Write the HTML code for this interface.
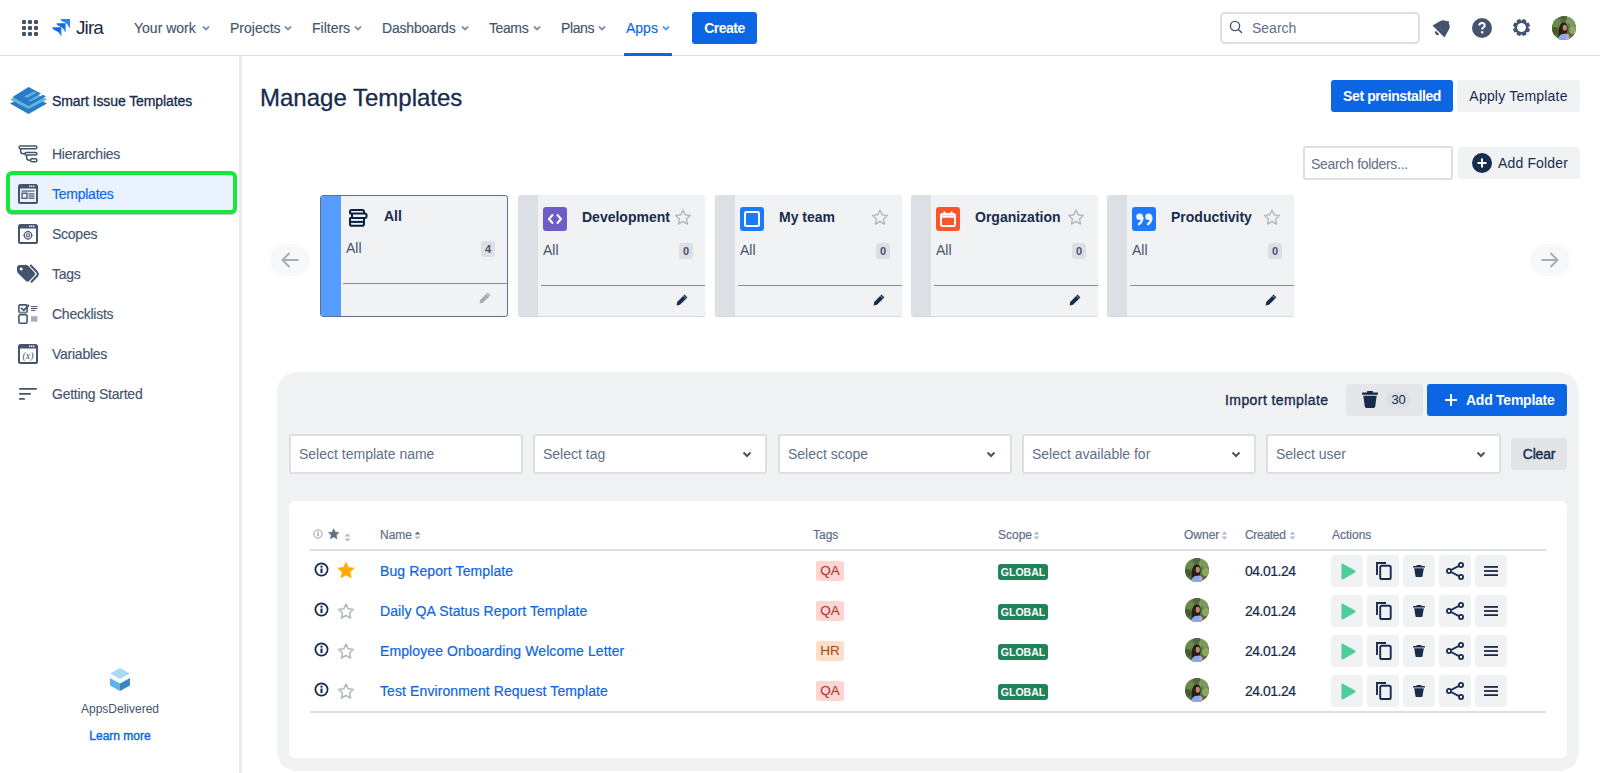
<!DOCTYPE html>
<html><head><meta charset="utf-8">
<style>
*{box-sizing:border-box;margin:0;padding:0}
html,body{width:1600px;height:773px;overflow:hidden;background:#fff;font-family:"Liberation Sans",sans-serif;color:#172b4d}
.a{position:absolute}
.t{position:absolute;white-space:nowrap;font-size:14px;line-height:20px}
svg{display:block}
/* top nav */
#nav{position:absolute;left:0;top:0;width:1600px;height:56px;border-bottom:1px solid #dcdfe4;background:#fff}
.ni{position:absolute;top:18px;font-size:14px;line-height:20px;color:#44546f;white-space:nowrap}
.chev{position:absolute;top:25px;width:8px;height:6px}
/* sidebar */
#side{position:absolute;left:0;top:56px;width:242px;height:717px;border-right:3px solid #ebecf0;background:#fff}
.si{position:absolute;left:52px;font-size:14px;line-height:20px;color:#44546f;white-space:nowrap;letter-spacing:-0.25px}
.sic{position:absolute;left:18px;width:20px;height:20px}
/* cards */
.card{position:absolute;top:195px;width:186.5px;height:121px;background:#f1f2f4;border-radius:3px;box-shadow:0 1px 1px rgba(9,30,66,0.18)}
.card .bar{position:absolute;left:0;top:0;bottom:0;width:20px;background:#dcdfe4;border-radius:3px 0 0 3px}
.card .ttl{position:absolute;top:207px}
.cnt{position:absolute;width:14px;height:16px;border-radius:3px;background:#dcdfe4;font-size:11px;font-weight:700;line-height:16px;text-align:center;color:#44546f}
.sep{position:absolute;height:1px;background:#858b95}
.inp{position:absolute;top:434px;height:40px;background:#fff;border:2px solid #dcdfe4;border-radius:3px}
.inp span{position:absolute;left:8px;top:8px;font-size:14px;line-height:20px;color:#626f86;white-space:nowrap}
.btn{position:absolute;width:32px;height:32px;border-radius:4px;background:#f1f2f4}
.th{position:absolute;top:527px;font-size:12px;line-height:16px;color:#626f86;white-space:nowrap}
.lnk{position:absolute;left:380px;font-size:14px;line-height:20px;color:#0c66e4;white-space:nowrap;letter-spacing:0.1px}
.tag{position:absolute;left:816px;width:28px;height:20px;border-radius:3px;background:#ffd5d2;color:#ae2e24;font-size:13.5px;line-height:20px;text-align:center}
.glob{position:absolute;left:998px;width:50px;height:16px;border-radius:3px;background:#1f845a;color:#fff;font-size:10.5px;font-weight:700;line-height:16px;text-align:center}
.date{position:absolute;left:1245px;font-size:14px;line-height:20px;color:#172b4d;letter-spacing:-0.5px}
.av{position:absolute;width:24px;height:24px;border-radius:50%;overflow:hidden}

.lnk,.th,.date{-webkit-text-stroke:0.2px currentColor}
.ni,.si{-webkit-text-stroke:0.15px currentColor}
</style></head><body>
<svg width="0" height="0" style="position:absolute"><defs>
<clipPath id="avc"><circle cx="12" cy="12" r="12"/></clipPath>
</defs></svg>

<!-- TOP NAV -->
<div id="nav">
  <!-- grid -->
  <svg class="a" style="left:22px;top:20px" width="16" height="16" viewBox="0 0 16 16" fill="#44546f">
    <rect x="0" y="0" width="4" height="4" rx="1"/><rect x="6" y="0" width="4" height="4" rx="1"/><rect x="12" y="0" width="4" height="4" rx="1"/>
    <rect x="0" y="6" width="4" height="4" rx="1"/><rect x="6" y="6" width="4" height="4" rx="1"/><rect x="12" y="6" width="4" height="4" rx="1"/>
    <rect x="0" y="12" width="4" height="4" rx="1"/><rect x="6" y="12" width="4" height="4" rx="1"/><rect x="12" y="12" width="4" height="4" rx="1"/>
  </svg>
  <!-- jira logo -->
  <svg class="a" style="left:52px;top:19px" width="19" height="18" viewBox="0 0 19 18">
    <defs><linearGradient id="jg" x1="0" y1="0" x2="0.8" y2="0.8"><stop offset="0" stop-color="#2a7ffb"/><stop offset="0.5" stop-color="#0f5fe0"/><stop offset="1" stop-color="#2684ff"/></linearGradient></defs>
    <path transform="translate(0.1 8.3)" d="M0 0.3 Q0 0 0.3 0 H9.3 V9.3 Q9.0 9.3 8.700000000000001 8.700000000000001 Q6.51 4.836 6.2 5 Q4.6 3.6 2 2.6 Q0 1.7 0 0.3 Z" fill="url(#jg)"/>
    <path transform="translate(4.4 4.15)" d="M0 0.3 Q0 0 0.3 0 H9.3 V9.3 Q9.0 9.3 8.700000000000001 8.700000000000001 Q6.51 4.836 6.2 5 Q4.6 3.6 2 2.6 Q0 1.7 0 0.3 Z" fill="url(#jg)"/>
    <path transform="translate(8.7 0)" d="M0 0.3 Q0 0 0.3 0 H9.3 V9.3 Q9.0 9.3 8.700000000000001 8.700000000000001 Q6.51 4.836 6.2 5 Q4.6 3.6 2 2.6 Q0 1.7 0 0.3 Z" fill="#2684ff"/>
  </svg>
  <div class="t" style="left:76px;top:16px;font-size:19px;line-height:24px;color:#1d2b45;letter-spacing:-0.9px">Jira</div>

  <div class="ni" style="left:134px">Your work</div>
  <div class="ni" style="left:230px">Projects</div>
  <div class="ni" style="left:312px">Filters</div>
  <div class="ni" style="left:382px;letter-spacing:-0.2px">Dashboards</div>
  <div class="ni" style="left:489px;letter-spacing:-0.4px">Teams</div>
  <div class="ni" style="left:561px;letter-spacing:-0.4px">Plans</div>
  <div class="ni" style="left:626px;color:#0c66e4">Apps</div>
  <div class="a" style="left:624px;top:53px;width:48px;height:3px;background:#0c66e4;border-radius:1px 1px 0 0"></div>

  <svg class="chev" style="left:202px" viewBox="0 0 8 6"><path d="M1 1.5 L4 4.5 L7 1.5" stroke="#8590a2" stroke-width="1.8" fill="none"/></svg>
  <svg class="chev" style="left:284px" viewBox="0 0 8 6"><path d="M1 1.5 L4 4.5 L7 1.5" stroke="#8590a2" stroke-width="1.8" fill="none"/></svg>
  <svg class="chev" style="left:354px" viewBox="0 0 8 6"><path d="M1 1.5 L4 4.5 L7 1.5" stroke="#8590a2" stroke-width="1.8" fill="none"/></svg>
  <svg class="chev" style="left:461px" viewBox="0 0 8 6"><path d="M1 1.5 L4 4.5 L7 1.5" stroke="#8590a2" stroke-width="1.8" fill="none"/></svg>
  <svg class="chev" style="left:533px" viewBox="0 0 8 6"><path d="M1 1.5 L4 4.5 L7 1.5" stroke="#8590a2" stroke-width="1.8" fill="none"/></svg>
  <svg class="chev" style="left:598px" viewBox="0 0 8 6"><path d="M1 1.5 L4 4.5 L7 1.5" stroke="#8590a2" stroke-width="1.8" fill="none"/></svg>
  <svg class="chev" style="left:662px" viewBox="0 0 8 6"><path d="M1 1.5 L4 4.5 L7 1.5" stroke="#579dff" stroke-width="1.8" fill="none"/></svg>

  <div class="a" style="left:692px;top:12px;width:65px;height:32px;background:#0c66e4;border-radius:3px"></div>
  <div class="t" style="left:692px;top:18px;width:65px;text-align:center;color:#fff;font-weight:700;letter-spacing:-0.5px">Create</div>

  <!-- search -->
  <div class="a" style="left:1220px;top:12px;width:200px;height:32px;border:2px solid #dcdfe4;border-radius:5px"></div>
  <svg class="a" style="left:1229px;top:20px" width="14" height="14" viewBox="0 0 14 14"><circle cx="6" cy="6" r="4.6" stroke="#44546f" stroke-width="1.4" fill="none"/><path d="M9.4 9.4 L12.6 12.6" stroke="#44546f" stroke-width="1.4" stroke-linecap="round"/></svg>
  <div class="t" style="left:1252px;top:18px;color:#626f86">Search</div>

  <!-- bell -->
  <svg class="a" style="left:1432px;top:17px" width="21" height="21" viewBox="0 0 20 20">
    <g transform="translate(10 10) rotate(45) scale(1.12) translate(-10 -9.5)" fill="#44546f"><path d="M2.8 14.3 L4.9 6.9 C5.5 4.4 7.5 3.2 10 3.2 C12.5 3.2 14.5 4.4 15.1 6.9 L17.2 14.3 Z"/><circle cx="10" cy="3.2" r="1.2"/><path d="M7.9 15.5 A2.1 2.1 0 0 0 12.1 15.5 Z"/></g>
  </svg>
  <!-- help -->
  <svg class="a" style="left:1472px;top:18px" width="20" height="20" viewBox="0 0 20 20">
    <circle cx="10" cy="10" r="10" fill="#44546f"/>
    <path d="M7.3 7.6 C7.3 5.9 8.5 5 10 5 C11.6 5 12.7 6 12.7 7.4 C12.7 8.7 11.9 9.2 11 9.8 C10.3 10.3 10.2 10.6 10.2 11.6" stroke="#fff" stroke-width="2" fill="none"/>
    <rect x="9.1" y="13.2" width="2.2" height="2.2" fill="#fff"/>
  </svg>
  <!-- gear -->
  <svg class="a" style="left:1512px;top:18px" width="19" height="19" viewBox="0 0 19 19">
    <g fill="#44546f" transform="translate(9.5 9.5)"><rect x="-2.1" y="-8.6" width="4.2" height="4" rx="1.2" transform="rotate(22.5)"/><rect x="-2.1" y="-8.6" width="4.2" height="4" rx="1.2" transform="rotate(67.5)"/><rect x="-2.1" y="-8.6" width="4.2" height="4" rx="1.2" transform="rotate(112.5)"/><rect x="-2.1" y="-8.6" width="4.2" height="4" rx="1.2" transform="rotate(157.5)"/><rect x="-2.1" y="-8.6" width="4.2" height="4" rx="1.2" transform="rotate(202.5)"/><rect x="-2.1" y="-8.6" width="4.2" height="4" rx="1.2" transform="rotate(247.5)"/><rect x="-2.1" y="-8.6" width="4.2" height="4" rx="1.2" transform="rotate(292.5)"/><rect x="-2.1" y="-8.6" width="4.2" height="4" rx="1.2" transform="rotate(337.5)"/></g>
    <circle cx="9.5" cy="9.5" r="5.7" stroke="#44546f" stroke-width="2.4" fill="none"/>
  </svg>
  <!-- avatar -->
  <svg class="a" style="left:1552px;top:16px" width="24" height="24" viewBox="0 0 24 24"><g clip-path="url(#avc)">
<rect width="24" height="24" fill="#56723c"/>
<circle cx="4" cy="7" r="5" fill="#6b8a4a"/><circle cx="19" cy="5" r="5.5" fill="#7c9b58"/><circle cx="21" cy="14" r="4" fill="#8ba763"/><circle cx="2" cy="15" r="4" fill="#435d2e"/><circle cx="12" cy="2" r="3" fill="#4f6a3a"/>
<circle cx="9" cy="3" r="1.3" fill="#6e5a86" opacity="0.7"/><circle cx="17" cy="9" r="1.2" fill="#6e5a86" opacity="0.6"/>
<path d="M6.5 21 Q6 15 7.5 10.5 Q9 6.5 12 6.5 Q14.8 6.5 15.3 10 Q15.8 13 14.5 18 L11 21 Z" fill="#2a1c16"/>
<ellipse cx="12.8" cy="11.8" rx="2.1" ry="3" fill="#b88a74"/>
<path d="M6 24 Q7 18.5 10.5 18 L14 17.5 Q16.5 18 17.5 20.5 L17.5 24 Z" fill="#86ade0"/>
<path d="M13.8 24 L14.8 18.3 Q16.3 18.2 16.8 19.3 L16.3 24 Z" fill="#e395d6"/>
</g></svg>
</div>

<!-- SIDEBAR -->
<div id="side">
  <!-- logo -->
  <svg class="a" style="left:10px;top:30px" width="37" height="28" viewBox="0 0 37 28">
    <path d="M0 17.5 L18.5 8 L37 17.5 L18.5 28 Z" fill="#2a7ac6"/>
    <path d="M0 13.5 L18.5 4 L37 13.5 L18.5 23 Z" fill="#5fb8dc"/>
    <path d="M2.5 11 L18.5 1 L31 7.5 L22 12.5 L24 13.5 L33 8.7 L36 10.5 L18.5 20 L2.5 11 Z" fill="#2a7ac6"/>
    <path d="M14 10.5 L24 5.3 L27 6.8 L17 12 Z" fill="#5fb8dc" opacity="0.9"/>
    <path d="M18.5 14.5 L28.5 9.3 L30.5 10.3 L20.5 15.5 Z" fill="#5fb8dc" opacity="0.9"/>
  </svg>
  <div class="t" style="left:52px;top:35px;font-weight:400;-webkit-text-stroke:0.3px #172b4d;letter-spacing:-0.1px;color:#172b4d">Smart Issue Templates</div>

  <!-- hierarchies -->
  <svg class="sic" style="top:89px" viewBox="0 0 20 20" fill="none" stroke="#44546f" stroke-width="1.5">
    <rect x="1.1" y="1.1" width="17.8" height="2.6" rx="1.3"/>
    <path d="M2.6 3.8 V6 Q2.6 8.8 5.4 8.8 H6.9"/>
    <rect x="6.9" y="7.6" width="12" height="2.5" rx="1.25"/>
    <path d="M8.6 10.2 V12.5 Q8.6 15.3 11.4 15.3 H12.6"/>
    <rect x="12.6" y="13.8" width="6.3" height="3" rx="1.4"/>
  </svg>
  <div class="si" style="top:88px">Hierarchies</div>

  <!-- selected templates -->
  <div class="a" style="left:6px;top:115px;width:231px;height:43px;border:4px solid #14e83a;border-radius:6px;background:#e9f2fe;box-shadow:0 1px 1px rgba(0,0,0,0.25)"></div>
  <svg class="sic" style="top:128px" viewBox="0 0 20 20">
    <rect x="0" y="0" width="20" height="20" rx="2.5" fill="#44546f"/>
    <rect x="2" y="4.5" width="16" height="13.5" rx="0.5" fill="#e9f2fe"/>
    <rect x="13" y="1.5" width="1.4" height="1.4" fill="#e9f2fe"/><rect x="15" y="1.5" width="1.4" height="1.4" fill="#e9f2fe"/><rect x="17" y="1.5" width="1.4" height="1.4" fill="#e9f2fe" opacity="0"/>
    <rect x="11" y="1.5" width="1.4" height="1.4" fill="#e9f2fe"/>
    <rect x="3.5" y="6.5" width="13" height="1.1" fill="#44546f"/>
    <rect x="4" y="9.2" width="5" height="5" fill="none" stroke="#44546f" stroke-width="1.3"/>
    <rect x="10.5" y="9.3" width="6" height="1.2" fill="#44546f"/>
    <rect x="10.5" y="11.5" width="6" height="1.2" fill="#44546f"/>
    <rect x="10.5" y="13.6" width="6" height="1.2" fill="#44546f"/>
  </svg>
  <div class="si" style="top:128px;color:#0c66e4">Templates</div>

  <!-- scopes -->
  <svg class="sic" style="top:168px" viewBox="0 0 20 20">
    <rect x="0" y="0" width="20" height="20" rx="2.5" fill="#44546f"/>
    <rect x="2" y="4.5" width="16" height="13.5" rx="0.5" fill="#fff"/>
    <rect x="11" y="1.5" width="1.4" height="1.4" fill="#fff"/><rect x="13" y="1.5" width="1.4" height="1.4" fill="#fff"/><rect x="15" y="1.5" width="1.4" height="1.4" fill="#fff"/>
    <circle cx="10" cy="11.3" r="3.7" fill="none" stroke="#44546f" stroke-width="1.2"/>
    <circle cx="10" cy="11.3" r="1.6" fill="none" stroke="#44546f" stroke-width="1.1"/>
    <path d="M5.2 11.3 H6.5 M13.5 11.3 H14.8 M10 6.6 V7.8 M10 14.8 V16" stroke="#44546f" stroke-width="1"/>
  </svg>
  <div class="si" style="top:168px">Scopes</div>

  <!-- tags -->
  <svg class="sic" style="top:208px;width:24px;left:16px" viewBox="0 0 24 20">
    <path d="M1 4 Q1 1 4 1 L10 1 Q11.5 1 12.5 2 L18.5 8.5 Q20 10 18.5 11.5 L13 17 Q11.5 18.5 10 17 L2.5 9.8 Q1 8.5 1 6.5 Z" fill="#44546f"/>
    <circle cx="5.2" cy="5" r="1.5" fill="#fff"/>
    <path d="M14.8 1.5 L21 8 Q22.6 10 21 12 L15.5 17.8" fill="none" stroke="#44546f" stroke-width="2" stroke-linecap="round"/>
  </svg>
  <div class="si" style="top:208px">Tags</div>

  <!-- checklists -->
  <svg class="sic" style="top:248px" viewBox="0 0 20 20" fill="none" stroke="#44546f">
    <rect x="0.9" y="0.9" width="8.2" height="7.6" rx="1.2" stroke-width="1.6"/>
    <path d="M3 3.8 L5.8 6.3 L11 0.8" stroke-width="1.8" stroke="#44546f"/>
    <rect x="1.5" y="8.5" width="7" height="2" fill="#a5adba" stroke="none"/>
    <rect x="0.9" y="10.8" width="8.2" height="8.4" rx="1.2" stroke-width="1.6"/>
    <path d="M13 2.6 H19.4 M13 4.5 H19.4 M13 6.4 H17.5" stroke-width="1"/>
    <rect x="13" y="12.2" width="6.4" height="5.4" fill="#a5adba" stroke="none"/>
  </svg>
  <div class="si" style="top:248px">Checklists</div>

  <!-- variables -->
  <svg class="sic" style="top:288px" viewBox="0 0 20 20">
    <rect x="0" y="0" width="20" height="20" rx="2.5" fill="#44546f"/>
    <rect x="2" y="4.5" width="16" height="13.5" rx="0.5" fill="#fff"/>
    <rect x="11" y="1.5" width="1.4" height="1.4" fill="#fff"/><rect x="13" y="1.5" width="1.4" height="1.4" fill="#fff"/><rect x="15" y="1.5" width="1.4" height="1.4" fill="#fff"/>
    <text x="10" y="14.6" text-anchor="middle" font-family="Liberation Serif" font-style="italic" font-size="10" fill="#44546f">(x)</text>
  </svg>
  <div class="si" style="top:288px">Variables</div>

  <!-- getting started -->
  <svg class="sic" style="top:328px" viewBox="0 0 20 20" fill="#44546f">
    <rect x="1" y="3.9" width="18" height="1.9" rx="0.9"/>
    <rect x="1" y="8.9" width="12" height="1.9" rx="0.9"/>
    <rect x="1" y="13.9" width="6" height="1.9" rx="0.9"/>
  </svg>
  <div class="si" style="top:328px">Getting Started</div>

  <!-- apps delivered -->
  <svg class="a" style="left:110px;top:612px" width="20" height="23" viewBox="0 0 20 23">
    <path d="M10 0 L20 5.5 L10 11 L0 5.5 Z" fill="#a9dbf5"/>
    <path d="M0 10 L10 15.5 L10 23 L0 17.5 Z" fill="#5eb3e6"/>
    <path d="M20 10 L10 15.5 L10 23 L20 17.5 Z" fill="#3a86c8"/>
  </svg>
  <div class="t" style="left:0;top:645px;width:240px;text-align:center;font-size:12px;line-height:16px;color:#44546f">AppsDelivered</div>
  <div class="t" style="left:0;top:672px;width:240px;text-align:center;font-size:12px;line-height:16px;color:#0c66e4;font-weight:400;-webkit-text-stroke:0.4px #0c66e4">Learn more</div>
</div>

<!-- MAIN -->
<div id="main">
  <div class="t" style="left:260px;top:83px;font-size:24px;line-height:30px;color:#172b4d;-webkit-text-stroke:0.3px #172b4d">Manage Templates</div>
  <div class="a" style="left:1331px;top:80px;width:122px;height:32px;background:#0c66e4;border-radius:3px"></div>
  <div class="t" style="left:1331px;top:86px;width:122px;text-align:center;color:#fff;font-weight:700;letter-spacing:-0.4px">Set preinstalled</div>
  <div class="a" style="left:1457px;top:80px;width:123px;height:32px;background:#f1f2f4;border-radius:3px"></div>
  <div class="t" style="left:1457px;top:86px;width:123px;text-align:center;color:#172b4d;letter-spacing:0.2px">Apply Template</div>

  <div class="a" style="left:1303px;top:146px;width:150px;height:34px;border:2px solid #dcdfe4;border-radius:3px;background:#fff"></div>
  <div class="t" style="left:1311px;top:154px;color:#626f86;letter-spacing:-0.3px">Search folders...</div>
  <div class="a" style="left:1458px;top:147px;width:122px;height:32px;background:#f1f2f4;border-radius:3px"></div>
  <svg class="a" style="left:1472px;top:153px" width="20" height="20" viewBox="0 0 20 20"><circle cx="10" cy="10" r="10" fill="#172b4d"/><path d="M10 5.5 V14.5 M5.5 10 H14.5" stroke="#fff" stroke-width="2"/></svg>
  <div class="t" style="left:1498px;top:153px;color:#172b4d;letter-spacing:0.15px">Add Folder</div>

  <div class="a" style="left:270px;top:244px;width:40px;height:32px;border-radius:16px;background:#f7f8f9"></div>
  <svg class="a" style="left:280px;top:251px" width="20" height="18" viewBox="0 0 20 18" fill="none" stroke="#a5adba" stroke-width="2"><path d="M18.5 9 H2.5 M9.5 2 L2.5 9 L9.5 16"/></svg>
  <div class="a" style="left:1530px;top:244px;width:40px;height:32px;border-radius:16px;background:#f7f8f9"></div>
  <svg class="a" style="left:1540px;top:251px" width="20" height="18" viewBox="0 0 20 18" fill="none" stroke="#a5adba" stroke-width="2"><path d="M1.5 9 H17.5 M10.5 2 L17.5 9 L10.5 16"/></svg>

  
  <div class="card" style="left:320px;width:188px;height:122px;border:1px solid #626f86;box-shadow:none">
    <div class="bar" style="left:0;width:20px;background:#579dff;border-radius:2px 0 0 2px"></div>
  </div>
  <svg class="a" style="left:348px;top:208px" width="20" height="20" viewBox="0 0 20 20" fill="none" stroke="#091e42" stroke-width="2">
    <path d="M2 5.6 V3.8 Q2 2 3.8 2 H14.2 Q16 2 16 3.8 V5.6"/>
    <path d="M1.5 5.6 H16.8 Q18.6 5.6 18.6 7.85 Q18.6 10.1 16.8 10.1 H1.5"/>
    <path d="M4 5.6 V10.1"/>
    <path d="M2 10.1 V15.9 Q2 17.7 3.8 17.7 H14.2 Q16 17.7 16 15.9 V10.1"/>
    <path d="M2 13.9 H16"/>
  </svg>
  <div class="t" style="left:384px;top:206px;font-weight:700;color:#172b4d">All</div>
  <div class="t" style="left:346px;top:238px;color:#44546f">All</div>
  <div class="cnt" style="left:481px;top:241px">4</div>
  <div class="sep" style="left:343px;top:283px;width:165px"></div>
  <svg class="a" style="left:479px;top:292px" width="12" height="12" viewBox="0 0 12 12"><path d="M8.6 0.6 L11.4 3.4 L4 10.8 L0.6 11.4 L1.2 8 Z" fill="#a5adba"/><path d="M7.4 1.8 L10.2 4.6" stroke="#f1f2f4" stroke-width="0.6"/></svg>

  <div class="card" style="left:518px"><div class="bar"></div></div>
  <svg class="a" style="left:543px;top:207px" width="24" height="24" viewBox="0 0 24 24"><rect width="24" height="24" rx="3" fill="#6e5dc6"/><path d="M9.5 8 L6 12 L9.5 16 M14.5 8 L18 12 L14.5 16" stroke="#fff" stroke-width="2" fill="none" stroke-linecap="round" stroke-linejoin="round"/></svg>
  <div class="t" style="left:582px;top:207px;font-weight:700;color:#172b4d">Development</div>
  <svg class="a" style="left:674px;top:208px" width="18" height="18" viewBox="0 0 20 20"><path d="M10.00 2.30 L12.41 7.58 L18.18 8.24 L13.90 12.17 L15.05 17.86 L10.00 15.00 L4.95 17.86 L6.10 12.17 L1.82 8.24 L7.59 7.58 Z" fill="none" stroke="#b3b9c4" stroke-width="1.6" stroke-linejoin="round"/></svg>
  <div class="t" style="left:543px;top:240px;color:#44546f">All</div>
  <div class="cnt" style="left:679px;top:243px">0</div>
  <div class="sep" style="left:541px;top:285px;width:163.5px"></div>
  <svg class="a" style="left:676px;top:294px" width="12" height="12" viewBox="0 0 12 12"><path d="M8.6 0.6 L11.4 3.4 L4 10.8 L0.6 11.4 L1.2 8 Z" fill="#172b4d"/><path d="M7.4 1.8 L10.2 4.6" stroke="#f1f2f4" stroke-width="0.6"/></svg>

  <div class="card" style="left:715px"><div class="bar"></div></div>
  <svg class="a" style="left:740px;top:207px" width="24" height="24" viewBox="0 0 24 24"><rect width="24" height="24" rx="3" fill="#1d7afc"/><rect x="5" y="5" width="14" height="14" rx="1.5" fill="none" stroke="#fff" stroke-width="2"/></svg>
  <div class="t" style="left:779px;top:207px;font-weight:700;color:#172b4d">My team</div>
  <svg class="a" style="left:871px;top:208px" width="18" height="18" viewBox="0 0 20 20"><path d="M10.00 2.30 L12.41 7.58 L18.18 8.24 L13.90 12.17 L15.05 17.86 L10.00 15.00 L4.95 17.86 L6.10 12.17 L1.82 8.24 L7.59 7.58 Z" fill="none" stroke="#b3b9c4" stroke-width="1.6" stroke-linejoin="round"/></svg>
  <div class="t" style="left:740px;top:240px;color:#44546f">All</div>
  <div class="cnt" style="left:876px;top:243px">0</div>
  <div class="sep" style="left:738px;top:285px;width:163.5px"></div>
  <svg class="a" style="left:873px;top:294px" width="12" height="12" viewBox="0 0 12 12"><path d="M8.6 0.6 L11.4 3.4 L4 10.8 L0.6 11.4 L1.2 8 Z" fill="#172b4d"/><path d="M7.4 1.8 L10.2 4.6" stroke="#f1f2f4" stroke-width="0.6"/></svg>

  <div class="card" style="left:911px"><div class="bar"></div></div>
  <svg class="a" style="left:936px;top:207px" width="24" height="24" viewBox="0 0 24 24"><rect width="24" height="24" rx="3" fill="#fc552c"/><rect x="5" y="7" width="14" height="12" rx="1.5" fill="none" stroke="#fff" stroke-width="2"/><path d="M5 9.5 H19" stroke="#fff" stroke-width="2.5"/><path d="M8.5 4.5 V7.5 M15.5 4.5 V7.5" stroke="#fff" stroke-width="2"/></svg>
  <div class="t" style="left:975px;top:207px;font-weight:700;color:#172b4d">Organization</div>
  <svg class="a" style="left:1067px;top:208px" width="18" height="18" viewBox="0 0 20 20"><path d="M10.00 2.30 L12.41 7.58 L18.18 8.24 L13.90 12.17 L15.05 17.86 L10.00 15.00 L4.95 17.86 L6.10 12.17 L1.82 8.24 L7.59 7.58 Z" fill="none" stroke="#b3b9c4" stroke-width="1.6" stroke-linejoin="round"/></svg>
  <div class="t" style="left:936px;top:240px;color:#44546f">All</div>
  <div class="cnt" style="left:1072px;top:243px">0</div>
  <div class="sep" style="left:934px;top:285px;width:163.5px"></div>
  <svg class="a" style="left:1069px;top:294px" width="12" height="12" viewBox="0 0 12 12"><path d="M8.6 0.6 L11.4 3.4 L4 10.8 L0.6 11.4 L1.2 8 Z" fill="#172b4d"/><path d="M7.4 1.8 L10.2 4.6" stroke="#f1f2f4" stroke-width="0.6"/></svg>

  <div class="card" style="left:1107px"><div class="bar"></div></div>
  <svg class="a" style="left:1132px;top:207px" width="24" height="24" viewBox="0 0 24 24"><rect width="24" height="24" rx="3" fill="#1d7afc"/><g fill="#f4f5f7"><circle cx="7.6" cy="9.7" r="3.3"/><circle cx="16.6" cy="9.7" r="3.3"/></g><g stroke="#f4f5f7" stroke-width="2.3" stroke-linecap="round" fill="none"><path d="M10.5 10.8 Q10.2 14.6 7 17.2"/><path d="M19.5 10.8 Q19.2 14.6 16 17.2"/></g></svg>
  <div class="t" style="left:1171px;top:207px;font-weight:700;color:#172b4d">Productivity</div>
  <svg class="a" style="left:1263px;top:208px" width="18" height="18" viewBox="0 0 20 20"><path d="M10.00 2.30 L12.41 7.58 L18.18 8.24 L13.90 12.17 L15.05 17.86 L10.00 15.00 L4.95 17.86 L6.10 12.17 L1.82 8.24 L7.59 7.58 Z" fill="none" stroke="#b3b9c4" stroke-width="1.6" stroke-linejoin="round"/></svg>
  <div class="t" style="left:1132px;top:240px;color:#44546f">All</div>
  <div class="cnt" style="left:1268px;top:243px">0</div>
  <div class="sep" style="left:1130px;top:285px;width:163.5px"></div>
  <svg class="a" style="left:1265px;top:294px" width="12" height="12" viewBox="0 0 12 12"><path d="M8.6 0.6 L11.4 3.4 L4 10.8 L0.6 11.4 L1.2 8 Z" fill="#172b4d"/><path d="M7.4 1.8 L10.2 4.6" stroke="#f1f2f4" stroke-width="0.6"/></svg>


  <!-- panel -->
  <div class="a" style="left:277px;top:372px;width:1302px;height:399px;background:#f1f2f4;border-radius:20px"></div>
  <div class="t" style="left:1225px;top:390px;font-weight:400;-webkit-text-stroke:0.35px #172b4d;color:#172b4d;letter-spacing:0.42px">Import template</div>
  <div class="a" style="left:1346px;top:384px;width:77px;height:32px;background:#e4e6ea;border-radius:3px"></div>
  <svg class="a" style="left:1362px;top:391px" width="16" height="17" viewBox="0 0 16 17" fill="#172b4d"><rect x="0" y="1.5" width="16" height="2.2" rx="0.6"/><rect x="5" y="0" width="6" height="2" rx="0.6"/><path d="M1.3 4.8 H14.7 L13.2 15.6 Q13 17 11.6 17 H4.4 Q3 17 2.8 15.6 Z"/></svg>
  <div class="a" style="left:1386px;top:392px;width:25px;height:16px;border-radius:8px;background:#dcdfe4"></div>
  <div class="t" style="left:1386px;top:390px;width:25px;text-align:center;color:#172b4d;font-size:13px;letter-spacing:-0.3px">30</div>
  <div class="a" style="left:1427px;top:384px;width:140px;height:32px;background:#0c66e4;border-radius:3px"></div>
  <svg class="a" style="left:1445px;top:394px" width="12" height="12" viewBox="0 0 12 12"><path d="M6 0 V12 M0 6 H12" stroke="#fff" stroke-width="2"/></svg>
  <div class="t" style="left:1466px;top:390px;color:#fff;font-weight:700;letter-spacing:-0.25px">Add Template</div>

  
  <div class="inp" style="left:289px;width:234px"><span>Select template name</span></div>
  <div class="inp" style="left:533px;width:234px"><span>Select tag</span></div><svg class="a" style="left:742px;top:451px" width="10" height="7" viewBox="0 0 10 7"><path d="M1.5 1.5 L5 5 L8.5 1.5" stroke="#44546f" stroke-width="2" fill="none"/></svg>
  <div class="inp" style="left:778px;width:234px"><span>Select scope</span></div><svg class="a" style="left:986px;top:451px" width="10" height="7" viewBox="0 0 10 7"><path d="M1.5 1.5 L5 5 L8.5 1.5" stroke="#44546f" stroke-width="2" fill="none"/></svg>
  <div class="inp" style="left:1022px;width:234px"><span>Select available for</span></div><svg class="a" style="left:1231px;top:451px" width="10" height="7" viewBox="0 0 10 7"><path d="M1.5 1.5 L5 5 L8.5 1.5" stroke="#44546f" stroke-width="2" fill="none"/></svg>
  <div class="inp" style="left:1266px;width:235px"><span>Select user</span></div><svg class="a" style="left:1476px;top:451px" width="10" height="7" viewBox="0 0 10 7"><path d="M1.5 1.5 L5 5 L8.5 1.5" stroke="#44546f" stroke-width="2" fill="none"/></svg>
  <div class="a" style="left:1511px;top:438px;width:56px;height:32px;background:#dcdfe4;border-radius:3px;opacity:0.75"></div>
  <div class="t" style="left:1511px;top:444px;width:56px;text-align:center;font-weight:400;-webkit-text-stroke:0.4px #172b4d;color:#172b4d;letter-spacing:-0.2px">Clear</div>


  <div class="a" style="left:289px;top:501px;width:1278px;height:257px;background:#fff;border-radius:6px"></div>
  <svg class="a" style="left:313px;top:529px" width="10" height="10" viewBox="0 0 16 16"><circle cx="8" cy="8" r="6.6" fill="none" stroke="#8590a2" stroke-width="1.4"/><rect x="7.05" y="7" width="1.9" height="4.6" fill="#8590a2"/><rect x="7.05" y="4.2" width="1.9" height="1.9" fill="#8590a2"/></svg>
  <svg class="a" style="left:328px;top:528px" width="11.5" height="11.5" viewBox="0 0 20 20"><path d="M10.00 1.30 L12.70 7.18 L19.13 7.93 L14.37 12.32 L15.64 18.67 L10.00 15.50 L4.36 18.67 L5.63 12.32 L0.87 7.93 L7.30 7.18 Z" fill="#626f86" stroke="#626f86" stroke-width="1" stroke-linejoin="round"/></svg>
  <svg class="a" style="left:344px;top:533px" width="7" height="9" viewBox="0 0 7 9"><path d="M0.5 3.5 L3.5 0.5 L6.5 3.5 Z" fill="#b3b9c4"/><path d="M0.5 5.5 L3.5 8.5 L6.5 5.5 Z" fill="#b3b9c4"/></svg>
  <div class="th" style="left:380px">Name</div><svg class="a" style="left:414px;top:531px" width="7" height="9" viewBox="0 0 7 9"><path d="M0.5 3.5 L3.5 0.5 L6.5 3.5 Z" fill="#626f86"/><path d="M0.5 5.5 L3.5 8.5 L6.5 5.5 Z" fill="#b3b9c4"/></svg>
  <div class="th" style="left:813px">Tags</div>
  <div class="th" style="left:998px">Scope</div><svg class="a" style="left:1033px;top:531px" width="7" height="9" viewBox="0 0 7 9"><path d="M0.5 3.5 L3.5 0.5 L6.5 3.5 Z" fill="#b3b9c4"/><path d="M0.5 5.5 L3.5 8.5 L6.5 5.5 Z" fill="#b3b9c4"/></svg>
  <div class="th" style="left:1184px">Owner</div><svg class="a" style="left:1221px;top:531px" width="7" height="9" viewBox="0 0 7 9"><path d="M0.5 3.5 L3.5 0.5 L6.5 3.5 Z" fill="#b3b9c4"/><path d="M0.5 5.5 L3.5 8.5 L6.5 5.5 Z" fill="#b3b9c4"/></svg>
  <div class="th" style="left:1245px;letter-spacing:-0.3px">Created</div><svg class="a" style="left:1289px;top:531px" width="7" height="9" viewBox="0 0 7 9"><path d="M0.5 3.5 L3.5 0.5 L6.5 3.5 Z" fill="#b3b9c4"/><path d="M0.5 5.5 L3.5 8.5 L6.5 5.5 Z" fill="#b3b9c4"/></svg>
  <div class="th" style="left:1332px">Actions</div>
  <div class="a" style="left:310px;top:549px;width:1236px;height:2px;background:#dcdfe4"></div>
  
  <svg class="a" style="left:314px;top:562px" width="15" height="15" viewBox="0 0 16 16"><circle cx="8" cy="8" r="6.5" fill="none" stroke="#172b4d" stroke-width="1.9"/><rect x="6.9" y="7" width="2.2" height="4.8" fill="#172b4d"/><rect x="6.9" y="3.9" width="2.2" height="2.1" fill="#172b4d"/></svg>
  <svg class="a" style="left:337px;top:561px" width="18" height="18" viewBox="0 0 20 20"><path d="M10.00 1.30 L12.70 7.18 L19.13 7.93 L14.37 12.32 L15.64 18.67 L10.00 15.50 L4.36 18.67 L5.63 12.32 L0.87 7.93 L7.30 7.18 Z" fill="#ffab00" stroke="#ffab00" stroke-width="0.8" stroke-linejoin="round"/></svg>
  <div class="lnk" style="top:561px">Bug Report Template</div>
  <div class="tag" style="top:561px;">QA</div>
  <div class="glob" style="top:564px">GLOBAL</div>
  <svg class="a" style="left:1185px;top:558px" width="24" height="24" viewBox="0 0 24 24"><g clip-path="url(#avc)">
<rect width="24" height="24" fill="#56723c"/>
<circle cx="4" cy="7" r="5" fill="#6b8a4a"/><circle cx="19" cy="5" r="5.5" fill="#7c9b58"/><circle cx="21" cy="14" r="4" fill="#8ba763"/><circle cx="2" cy="15" r="4" fill="#435d2e"/><circle cx="12" cy="2" r="3" fill="#4f6a3a"/>
<circle cx="9" cy="3" r="1.3" fill="#6e5a86" opacity="0.7"/><circle cx="17" cy="9" r="1.2" fill="#6e5a86" opacity="0.6"/>
<path d="M6.5 21 Q6 15 7.5 10.5 Q9 6.5 12 6.5 Q14.8 6.5 15.3 10 Q15.8 13 14.5 18 L11 21 Z" fill="#2a1c16"/>
<ellipse cx="12.8" cy="11.8" rx="2.1" ry="3" fill="#b88a74"/>
<path d="M6 24 Q7 18.5 10.5 18 L14 17.5 Q16.5 18 17.5 20.5 L17.5 24 Z" fill="#86ade0"/>
<path d="M13.8 24 L14.8 18.3 Q16.3 18.2 16.8 19.3 L16.3 24 Z" fill="#e395d6"/>
</g></svg>
  <div class="date" style="top:561px">04.01.24</div>
  <div class="btn" style="left:1331px;top:555px"></div>
  <svg class="a" style="left:1341px;top:563px" width="15" height="17" viewBox="0 0 15 17"><path d="M0.5 1.5 Q0.5 0 2 0.8 L14 7.5 Q15 8.5 14 9.5 L2 16.2 Q0.5 17 0.5 15.5 Z" fill="#4bce97"/></svg>
  <div class="btn" style="left:1367px;top:555px"></div>
  <svg class="a" style="left:1376px;top:562px" width="16" height="18" viewBox="0 0 16 18" fill="none" stroke="#172b4d" stroke-width="1.9"><path d="M1 13 V1 H10"/><rect x="4.2" y="3.8" width="10.5" height="13.2" rx="1.6"/></svg>
  <div class="btn" style="left:1403px;top:555px"></div>
  <svg class="a" style="left:1413px;top:565px" width="12" height="12" viewBox="0 0 12 12" fill="#172b4d"><rect x="0" y="1" width="12" height="1.6" rx="0.5"/><rect x="3.5" y="0" width="5" height="1.5" rx="0.5"/><path d="M1.2 3.3 H10.8 L9.5 11.2 Q9.4 12 8.6 12 H3.4 Q2.6 12 2.5 11.2 Z"/></svg>
  <div class="btn" style="left:1439px;top:555px"></div>
  <svg class="a" style="left:1446px;top:562px" width="18" height="18" viewBox="0 0 18 18" fill="none" stroke="#172b4d" stroke-width="1.8"><circle cx="15" cy="3" r="2.1"/><circle cx="15" cy="15" r="2.1"/><circle cx="3" cy="9" r="2.1"/><path d="M5 8 L13 3.9 M5 10 L13 14.1"/></svg>
  <div class="btn" style="left:1475px;top:555px"></div>
  <svg class="a" style="left:1484px;top:566px" width="14" height="10" viewBox="0 0 14 10" fill="#172b4d"><rect y="0" width="14" height="1.8"/><rect y="4.1" width="14" height="1.8"/><rect y="8.2" width="14" height="1.8"/></svg>

  <svg class="a" style="left:314px;top:602px" width="15" height="15" viewBox="0 0 16 16"><circle cx="8" cy="8" r="6.5" fill="none" stroke="#172b4d" stroke-width="1.9"/><rect x="6.9" y="7" width="2.2" height="4.8" fill="#172b4d"/><rect x="6.9" y="3.9" width="2.2" height="2.1" fill="#172b4d"/></svg>
  <svg class="a" style="left:337px;top:602px" width="18" height="18" viewBox="0 0 20 20"><path d="M10.00 2.30 L12.41 7.58 L18.18 8.24 L13.90 12.17 L15.05 17.86 L10.00 15.00 L4.95 17.86 L6.10 12.17 L1.82 8.24 L7.59 7.58 Z" fill="none" stroke="#b3b9c4" stroke-width="1.7" stroke-linejoin="round"/></svg>
  <div class="lnk" style="top:601px">Daily QA Status Report Template</div>
  <div class="tag" style="top:601px;">QA</div>
  <div class="glob" style="top:604px">GLOBAL</div>
  <svg class="a" style="left:1185px;top:598px" width="24" height="24" viewBox="0 0 24 24"><g clip-path="url(#avc)">
<rect width="24" height="24" fill="#56723c"/>
<circle cx="4" cy="7" r="5" fill="#6b8a4a"/><circle cx="19" cy="5" r="5.5" fill="#7c9b58"/><circle cx="21" cy="14" r="4" fill="#8ba763"/><circle cx="2" cy="15" r="4" fill="#435d2e"/><circle cx="12" cy="2" r="3" fill="#4f6a3a"/>
<circle cx="9" cy="3" r="1.3" fill="#6e5a86" opacity="0.7"/><circle cx="17" cy="9" r="1.2" fill="#6e5a86" opacity="0.6"/>
<path d="M6.5 21 Q6 15 7.5 10.5 Q9 6.5 12 6.5 Q14.8 6.5 15.3 10 Q15.8 13 14.5 18 L11 21 Z" fill="#2a1c16"/>
<ellipse cx="12.8" cy="11.8" rx="2.1" ry="3" fill="#b88a74"/>
<path d="M6 24 Q7 18.5 10.5 18 L14 17.5 Q16.5 18 17.5 20.5 L17.5 24 Z" fill="#86ade0"/>
<path d="M13.8 24 L14.8 18.3 Q16.3 18.2 16.8 19.3 L16.3 24 Z" fill="#e395d6"/>
</g></svg>
  <div class="date" style="top:601px">24.01.24</div>
  <div class="btn" style="left:1331px;top:595px"></div>
  <svg class="a" style="left:1341px;top:603px" width="15" height="17" viewBox="0 0 15 17"><path d="M0.5 1.5 Q0.5 0 2 0.8 L14 7.5 Q15 8.5 14 9.5 L2 16.2 Q0.5 17 0.5 15.5 Z" fill="#4bce97"/></svg>
  <div class="btn" style="left:1367px;top:595px"></div>
  <svg class="a" style="left:1376px;top:602px" width="16" height="18" viewBox="0 0 16 18" fill="none" stroke="#172b4d" stroke-width="1.9"><path d="M1 13 V1 H10"/><rect x="4.2" y="3.8" width="10.5" height="13.2" rx="1.6"/></svg>
  <div class="btn" style="left:1403px;top:595px"></div>
  <svg class="a" style="left:1413px;top:605px" width="12" height="12" viewBox="0 0 12 12" fill="#172b4d"><rect x="0" y="1" width="12" height="1.6" rx="0.5"/><rect x="3.5" y="0" width="5" height="1.5" rx="0.5"/><path d="M1.2 3.3 H10.8 L9.5 11.2 Q9.4 12 8.6 12 H3.4 Q2.6 12 2.5 11.2 Z"/></svg>
  <div class="btn" style="left:1439px;top:595px"></div>
  <svg class="a" style="left:1446px;top:602px" width="18" height="18" viewBox="0 0 18 18" fill="none" stroke="#172b4d" stroke-width="1.8"><circle cx="15" cy="3" r="2.1"/><circle cx="15" cy="15" r="2.1"/><circle cx="3" cy="9" r="2.1"/><path d="M5 8 L13 3.9 M5 10 L13 14.1"/></svg>
  <div class="btn" style="left:1475px;top:595px"></div>
  <svg class="a" style="left:1484px;top:606px" width="14" height="10" viewBox="0 0 14 10" fill="#172b4d"><rect y="0" width="14" height="1.8"/><rect y="4.1" width="14" height="1.8"/><rect y="8.2" width="14" height="1.8"/></svg>

  <svg class="a" style="left:314px;top:642px" width="15" height="15" viewBox="0 0 16 16"><circle cx="8" cy="8" r="6.5" fill="none" stroke="#172b4d" stroke-width="1.9"/><rect x="6.9" y="7" width="2.2" height="4.8" fill="#172b4d"/><rect x="6.9" y="3.9" width="2.2" height="2.1" fill="#172b4d"/></svg>
  <svg class="a" style="left:337px;top:642px" width="18" height="18" viewBox="0 0 20 20"><path d="M10.00 2.30 L12.41 7.58 L18.18 8.24 L13.90 12.17 L15.05 17.86 L10.00 15.00 L4.95 17.86 L6.10 12.17 L1.82 8.24 L7.59 7.58 Z" fill="none" stroke="#b3b9c4" stroke-width="1.7" stroke-linejoin="round"/></svg>
  <div class="lnk" style="top:641px">Employee Onboarding Welcome Letter</div>
  <div class="tag" style="top:641px;background:#fedec8;color:#a54800">HR</div>
  <div class="glob" style="top:644px">GLOBAL</div>
  <svg class="a" style="left:1185px;top:638px" width="24" height="24" viewBox="0 0 24 24"><g clip-path="url(#avc)">
<rect width="24" height="24" fill="#56723c"/>
<circle cx="4" cy="7" r="5" fill="#6b8a4a"/><circle cx="19" cy="5" r="5.5" fill="#7c9b58"/><circle cx="21" cy="14" r="4" fill="#8ba763"/><circle cx="2" cy="15" r="4" fill="#435d2e"/><circle cx="12" cy="2" r="3" fill="#4f6a3a"/>
<circle cx="9" cy="3" r="1.3" fill="#6e5a86" opacity="0.7"/><circle cx="17" cy="9" r="1.2" fill="#6e5a86" opacity="0.6"/>
<path d="M6.5 21 Q6 15 7.5 10.5 Q9 6.5 12 6.5 Q14.8 6.5 15.3 10 Q15.8 13 14.5 18 L11 21 Z" fill="#2a1c16"/>
<ellipse cx="12.8" cy="11.8" rx="2.1" ry="3" fill="#b88a74"/>
<path d="M6 24 Q7 18.5 10.5 18 L14 17.5 Q16.5 18 17.5 20.5 L17.5 24 Z" fill="#86ade0"/>
<path d="M13.8 24 L14.8 18.3 Q16.3 18.2 16.8 19.3 L16.3 24 Z" fill="#e395d6"/>
</g></svg>
  <div class="date" style="top:641px">24.01.24</div>
  <div class="btn" style="left:1331px;top:635px"></div>
  <svg class="a" style="left:1341px;top:643px" width="15" height="17" viewBox="0 0 15 17"><path d="M0.5 1.5 Q0.5 0 2 0.8 L14 7.5 Q15 8.5 14 9.5 L2 16.2 Q0.5 17 0.5 15.5 Z" fill="#4bce97"/></svg>
  <div class="btn" style="left:1367px;top:635px"></div>
  <svg class="a" style="left:1376px;top:642px" width="16" height="18" viewBox="0 0 16 18" fill="none" stroke="#172b4d" stroke-width="1.9"><path d="M1 13 V1 H10"/><rect x="4.2" y="3.8" width="10.5" height="13.2" rx="1.6"/></svg>
  <div class="btn" style="left:1403px;top:635px"></div>
  <svg class="a" style="left:1413px;top:645px" width="12" height="12" viewBox="0 0 12 12" fill="#172b4d"><rect x="0" y="1" width="12" height="1.6" rx="0.5"/><rect x="3.5" y="0" width="5" height="1.5" rx="0.5"/><path d="M1.2 3.3 H10.8 L9.5 11.2 Q9.4 12 8.6 12 H3.4 Q2.6 12 2.5 11.2 Z"/></svg>
  <div class="btn" style="left:1439px;top:635px"></div>
  <svg class="a" style="left:1446px;top:642px" width="18" height="18" viewBox="0 0 18 18" fill="none" stroke="#172b4d" stroke-width="1.8"><circle cx="15" cy="3" r="2.1"/><circle cx="15" cy="15" r="2.1"/><circle cx="3" cy="9" r="2.1"/><path d="M5 8 L13 3.9 M5 10 L13 14.1"/></svg>
  <div class="btn" style="left:1475px;top:635px"></div>
  <svg class="a" style="left:1484px;top:646px" width="14" height="10" viewBox="0 0 14 10" fill="#172b4d"><rect y="0" width="14" height="1.8"/><rect y="4.1" width="14" height="1.8"/><rect y="8.2" width="14" height="1.8"/></svg>

  <svg class="a" style="left:314px;top:682px" width="15" height="15" viewBox="0 0 16 16"><circle cx="8" cy="8" r="6.5" fill="none" stroke="#172b4d" stroke-width="1.9"/><rect x="6.9" y="7" width="2.2" height="4.8" fill="#172b4d"/><rect x="6.9" y="3.9" width="2.2" height="2.1" fill="#172b4d"/></svg>
  <svg class="a" style="left:337px;top:682px" width="18" height="18" viewBox="0 0 20 20"><path d="M10.00 2.30 L12.41 7.58 L18.18 8.24 L13.90 12.17 L15.05 17.86 L10.00 15.00 L4.95 17.86 L6.10 12.17 L1.82 8.24 L7.59 7.58 Z" fill="none" stroke="#b3b9c4" stroke-width="1.7" stroke-linejoin="round"/></svg>
  <div class="lnk" style="top:681px">Test Environment Request Template</div>
  <div class="tag" style="top:681px;">QA</div>
  <div class="glob" style="top:684px">GLOBAL</div>
  <svg class="a" style="left:1185px;top:678px" width="24" height="24" viewBox="0 0 24 24"><g clip-path="url(#avc)">
<rect width="24" height="24" fill="#56723c"/>
<circle cx="4" cy="7" r="5" fill="#6b8a4a"/><circle cx="19" cy="5" r="5.5" fill="#7c9b58"/><circle cx="21" cy="14" r="4" fill="#8ba763"/><circle cx="2" cy="15" r="4" fill="#435d2e"/><circle cx="12" cy="2" r="3" fill="#4f6a3a"/>
<circle cx="9" cy="3" r="1.3" fill="#6e5a86" opacity="0.7"/><circle cx="17" cy="9" r="1.2" fill="#6e5a86" opacity="0.6"/>
<path d="M6.5 21 Q6 15 7.5 10.5 Q9 6.5 12 6.5 Q14.8 6.5 15.3 10 Q15.8 13 14.5 18 L11 21 Z" fill="#2a1c16"/>
<ellipse cx="12.8" cy="11.8" rx="2.1" ry="3" fill="#b88a74"/>
<path d="M6 24 Q7 18.5 10.5 18 L14 17.5 Q16.5 18 17.5 20.5 L17.5 24 Z" fill="#86ade0"/>
<path d="M13.8 24 L14.8 18.3 Q16.3 18.2 16.8 19.3 L16.3 24 Z" fill="#e395d6"/>
</g></svg>
  <div class="date" style="top:681px">24.01.24</div>
  <div class="btn" style="left:1331px;top:675px"></div>
  <svg class="a" style="left:1341px;top:683px" width="15" height="17" viewBox="0 0 15 17"><path d="M0.5 1.5 Q0.5 0 2 0.8 L14 7.5 Q15 8.5 14 9.5 L2 16.2 Q0.5 17 0.5 15.5 Z" fill="#4bce97"/></svg>
  <div class="btn" style="left:1367px;top:675px"></div>
  <svg class="a" style="left:1376px;top:682px" width="16" height="18" viewBox="0 0 16 18" fill="none" stroke="#172b4d" stroke-width="1.9"><path d="M1 13 V1 H10"/><rect x="4.2" y="3.8" width="10.5" height="13.2" rx="1.6"/></svg>
  <div class="btn" style="left:1403px;top:675px"></div>
  <svg class="a" style="left:1413px;top:685px" width="12" height="12" viewBox="0 0 12 12" fill="#172b4d"><rect x="0" y="1" width="12" height="1.6" rx="0.5"/><rect x="3.5" y="0" width="5" height="1.5" rx="0.5"/><path d="M1.2 3.3 H10.8 L9.5 11.2 Q9.4 12 8.6 12 H3.4 Q2.6 12 2.5 11.2 Z"/></svg>
  <div class="btn" style="left:1439px;top:675px"></div>
  <svg class="a" style="left:1446px;top:682px" width="18" height="18" viewBox="0 0 18 18" fill="none" stroke="#172b4d" stroke-width="1.8"><circle cx="15" cy="3" r="2.1"/><circle cx="15" cy="15" r="2.1"/><circle cx="3" cy="9" r="2.1"/><path d="M5 8 L13 3.9 M5 10 L13 14.1"/></svg>
  <div class="btn" style="left:1475px;top:675px"></div>
  <svg class="a" style="left:1484px;top:686px" width="14" height="10" viewBox="0 0 14 10" fill="#172b4d"><rect y="0" width="14" height="1.8"/><rect y="4.1" width="14" height="1.8"/><rect y="8.2" width="14" height="1.8"/></svg>

  <div class="a" style="left:310px;top:711px;width:1236px;height:2px;background:#dcdfe4"></div>
</div>

</body></html>
